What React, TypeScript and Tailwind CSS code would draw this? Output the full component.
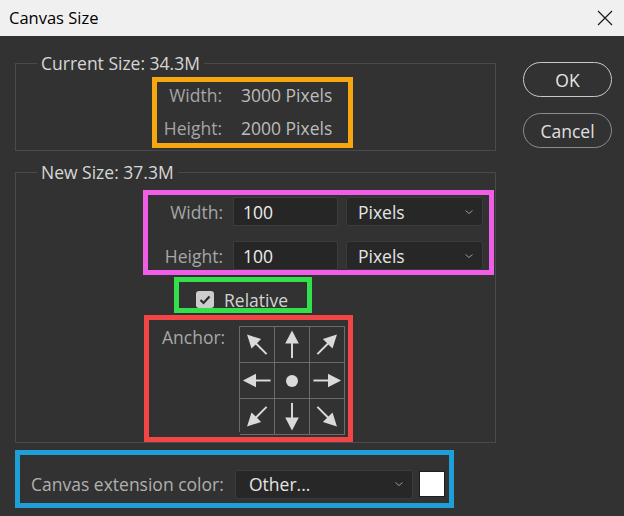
import React from 'react';

const font = { fontFamily: '"Open Sans", "Noto Sans", sans-serif' };

const Chevron: React.FC = () => (
  <svg width="10" height="6" viewBox="0 0 10 6" className="shrink-0">
    <path d="M1.5 1.5 L5 4.5 L8.5 1.5" fill="none" stroke="#9a9a9a" strokeWidth="1" />
  </svg>
);

const Select: React.FC<{ value: string; className?: string }> = ({ value, className }) => (
  <div
    className={`flex items-center justify-between rounded-[3px] border border-[#3b3b3b] bg-[#272727] pr-[8px] text-[#e4e4e4] ${className ?? ''}`}
  >
    <span>{value}</span>
    <Chevron />
  </div>
);

// one arrow pointing up, rotated for every direction
const Arrow: React.FC<{ angle: number }> = ({ angle }) => (
  <svg width="35" height="35" viewBox="0 0 35 35">
    <g transform={`rotate(${angle} 17.5 17.5)`} fill="#dadada">
      <polygon points="17.5,3 10.5,16.5 24.5,16.5" />
      <rect x="16.5" y="16" width="2" height="15.5" />
    </g>
  </svg>
);

const anchorCells: (number | null)[] = [-45, 0, 45, -90, null, 90, -135, 180, 135];

const App: React.FC = () => {
  return (
    <div className="w-[624px] h-[516px] overflow-hidden bg-[#323232] flex flex-col" style={font}>
      {/* title bar */}
      <div className="h-[36px] shrink-0 bg-[#f0f0f0] flex items-center justify-between pl-[9px] pr-[11px]">
        <span className="text-[16.5px] text-black leading-none">Canvas Size</span>
        <svg width="16" height="16" viewBox="0 0 16 16">
          <path d="M1 1 L15 15 M15 1 L1 15" stroke="#1a1a1a" strokeWidth="1.2" />
        </svg>
      </div>

      <div className="flex pt-[17px] pl-[15px] text-[17.5px] leading-[20px]">
        {/* left column */}
        <div className="w-[481px] flex flex-col">
          <fieldset className="border border-[#4a4a4a] pl-[21px] pb-[2px]">
            <legend className="px-[4px] text-[#d6d6d6]">Current Size: 34.3M</legend>
            <div className="ml-[115px] mt-[4px] w-[201px] border-[5px] border-[#f6a60e] flex flex-col gap-[7px] pb-[2px] text-[#bcbcbc]">
              <div className="h-[26px] flex items-center">
                <span className="w-[65px] text-right text-[#a6a6a6]">Width:</span>
                <span className="ml-[19px]">3000 Pixels</span>
              </div>
              <div className="h-[26px] flex items-center">
                <span className="w-[65px] text-right text-[#a6a6a6]">Height:</span>
                <span className="ml-[19px]">2000 Pixels</span>
              </div>
            </div>
          </fieldset>

          <fieldset className="mt-[11px] border border-[#4a4a4a] pl-[21px]">
            <legend className="px-[4px] text-[#d6d6d6]">New Size: 37.3M</legend>
            <div className="ml-[106px] mt-[8px] w-[351px] h-[85px] border-[5px] border-[#f05ee8] overflow-hidden">
              <div className="flex flex-col gap-[15px] pt-[2px]">
                {['Width:', 'Height:'].map((label) => (
                  <div key={label} className="h-[29px] flex items-center">
                    <span className="w-[75px] text-right text-[#a6a6a6]">{label}</span>
                    <div className="ml-[10px] w-[105px] h-[29px] border border-[#3d3d3d] bg-[#262626] flex items-center pl-[9px] text-[#ececec]">
                      100
                    </div>
                    <Select value="Pixels" className="ml-[8px] w-[137px] h-[29px] pl-[11px]" />
                  </div>
                ))}
              </div>
            </div>

            <div className="ml-[137px] mt-[2px] w-[138px] h-[36px] border-[5px] border-[#33df4a] flex items-center pt-[9px] pl-[17px] overflow-hidden">
              <div className="w-[18px] h-[17px] rounded-[3px] bg-[#cdcdcd] flex items-center justify-center">
                <svg width="12" height="10" viewBox="0 0 12 10">
                  <path d="M1.5 5 L4.5 8 L10.5 1.5" fill="none" stroke="#2b2b2b" strokeWidth="2.2" />
                </svg>
              </div>
              <span className="ml-[10px] text-[#d2d2d2]">Relative</span>
            </div>

            <div className="ml-[107px] mt-[2px] w-[209px] h-[127px] border-[5px] border-[#f24646] flex pl-[13px] pt-[6px]">
              <span className="w-[77px] pt-[1px] text-[#a8a8a8]">Anchor:</span>
              <div className="grid grid-cols-3 w-[106px] h-[106px] border-l border-t border-[#6b6b6b]">
                {anchorCells.map((a, i) => (
                  <div key={i} className="border-r border-b border-[#6b6b6b] flex items-center justify-center">
                    {a === null ? (
                      <div className="w-[12px] h-[12px] rounded-full bg-[#dadada]" />
                    ) : (
                      <Arrow angle={a} />
                    )}
                  </div>
                ))}
              </div>
            </div>
          </fieldset>

          <div className="mt-[7px] w-[439px] h-[58px] border-[5px] border-[#1f9fd7] flex items-center pt-[10px] pl-[11px]">
            <span className="w-[204px] text-[#b0b0b0] whitespace-nowrap">Canvas extension color:</span>
            <Select value="Other..." className="w-[178px] h-[29px] pl-[13px]" />
            <div className="ml-[6px] w-[26px] h-[26px] border border-[#1e1e1e] bg-white" />
          </div>
        </div>

        {/* buttons */}
        <div className="ml-[27px] mt-[9px] flex flex-col gap-[16px]">
          <button className="w-[89px] h-[35px] rounded-full border border-[#c9c9c9] text-[#e6e6e6]">OK</button>
          <button className="w-[89px] h-[35px] rounded-full border border-[#8c8c8c] text-[#e0e0e0]">Cancel</button>
        </div>
      </div>
    </div>
  );
};

export default App;
